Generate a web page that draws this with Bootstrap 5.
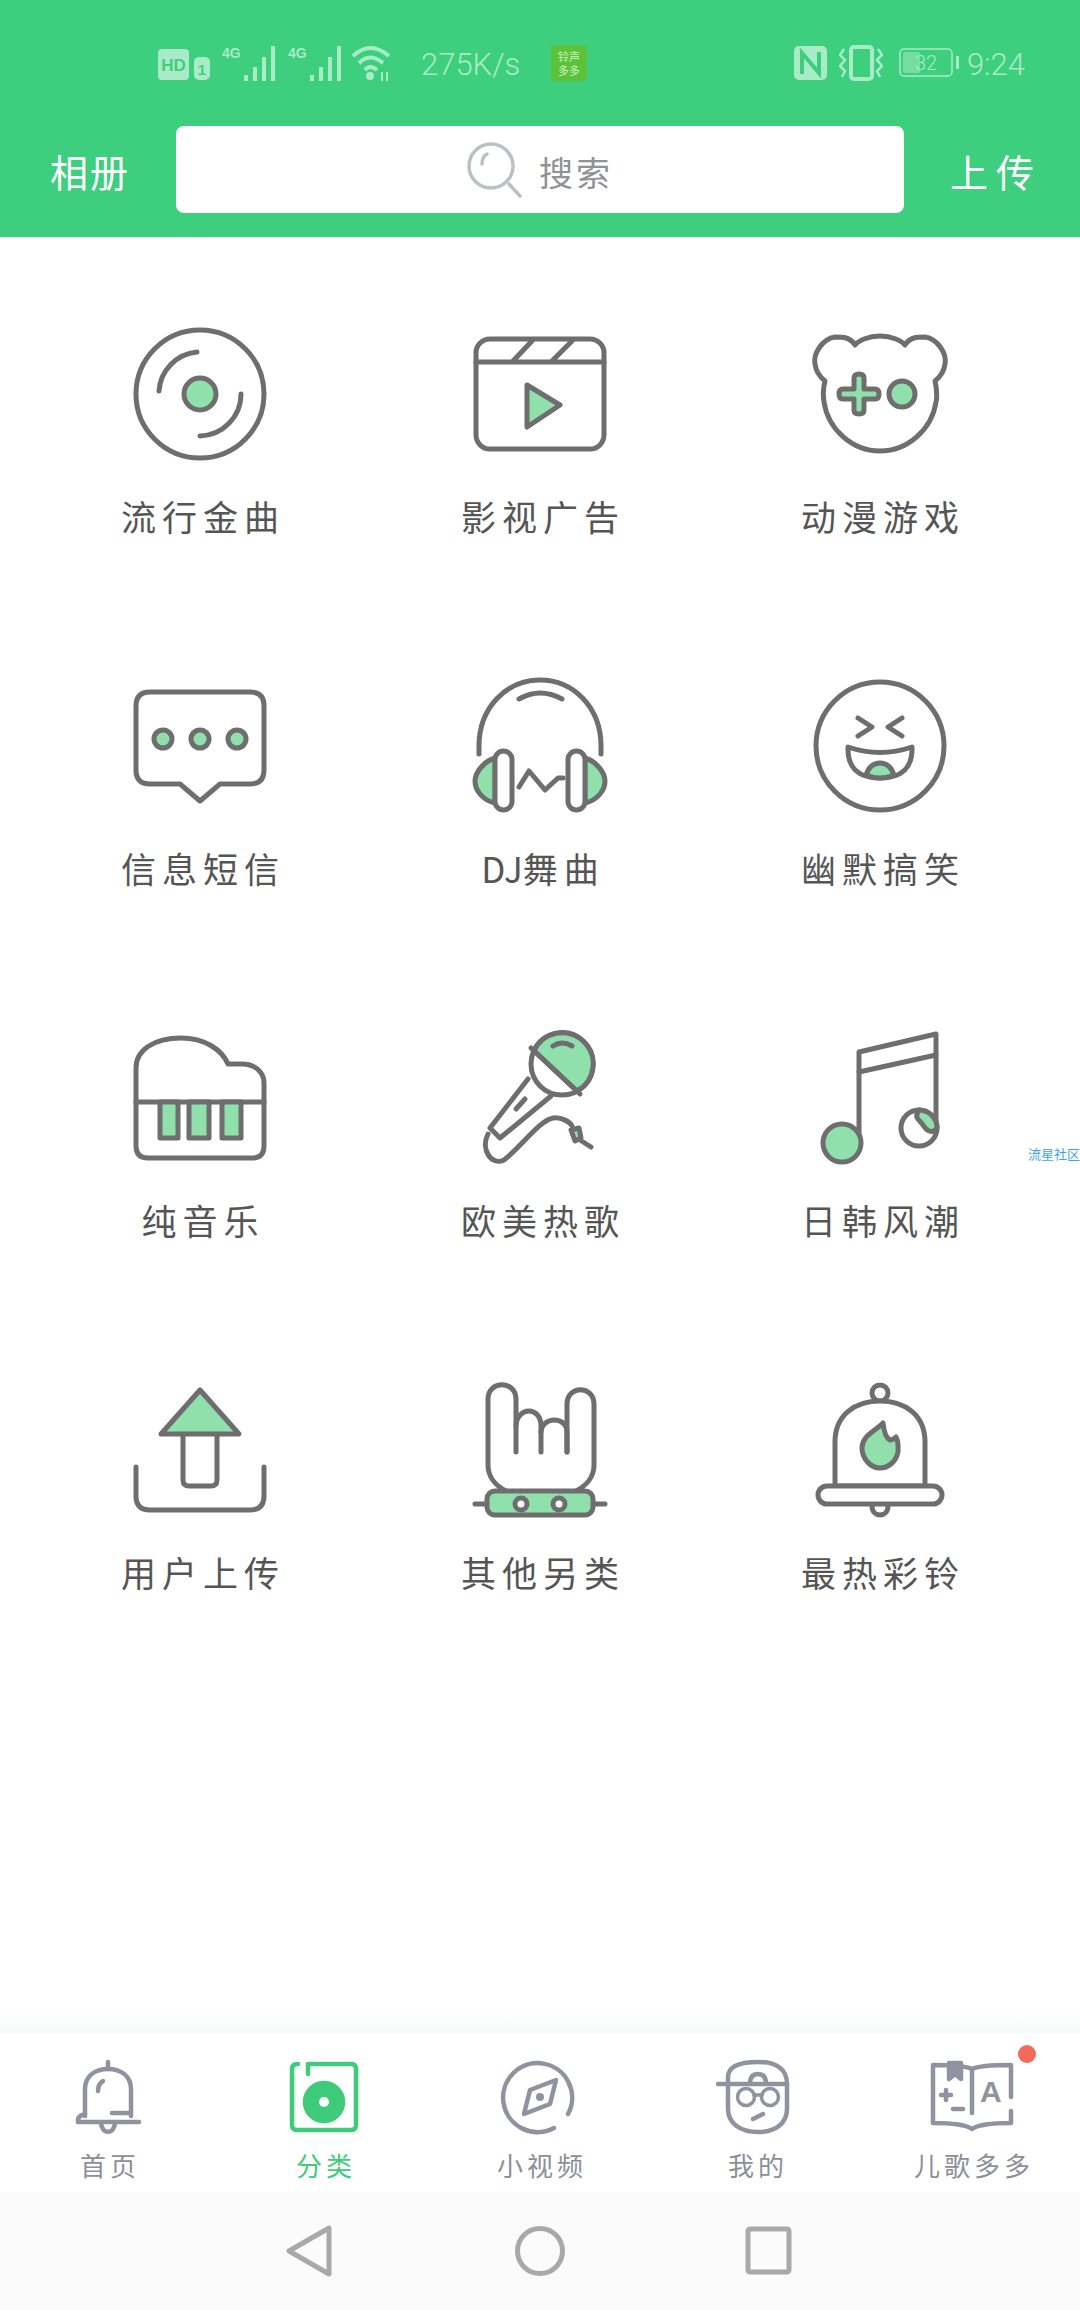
<!DOCTYPE html>
<html lang="zh-CN">
<head>
  <meta charset="UTF-8" />
  <meta name="viewport" content="width=device-width, initial-scale=1.0"/>
  <title>铃声多多</title>
  <link href="https://cdn.jsdelivr.net/npm/bootstrap@5.3.0/dist/css/bootstrap.min.css" rel="stylesheet">
  <style>
    body { background: #fff; font-family: "Noto Sans CJK SC", "Liberation Sans", sans-serif; }
    .phone { width: 1080px; height: 2310px; overflow: hidden; position: relative; }

    .top-head { background: #3ecf7e; height: 237px; padding-top: 44px; }
    .stat-bar { height: 37px; color: #a9ebc6; font-family: Roboto, "Liberation Sans", sans-serif; font-size: 31px; font-weight: 300; padding-left: 158px; padding-right: 55px; }
    .stat-bar svg { display: block; flex: none; fill: #a9ebc6; stroke: none; }
    .stat-txt { padding-top: 5px; }
    .gap-sig { margin-left: 12px; }
    .gap-wifi { margin-left: 9px; }
    .gap-vib { margin-left: 11px; }
    .speed { margin-left: 30px; width: 98px; margin-right: 32px; white-space: nowrap; }
    .app-tile { width: 36px; height: 36px; background: #5cc23a; border-radius: 3px; color: #c9f0c0; font: 11px/14px "Noto Sans CJK SC", sans-serif; text-align: center; padding-top: 4px; }
    .search-row { margin-top: 45px; height: 87px; padding: 0 46px 0 50px; }
    .side-txt { color: #fff; font-size: 38px; line-height: 1; white-space: nowrap; padding-top: 3px; }
    .side-l { width: 126px; letter-spacing: 2px; }
    .side-r { width: 84px; letter-spacing: 8px; text-align: right; margin-left: 46px; margin-right: -3px; }
    .search-box { width: 728px; height: 87px; background: #fff; border-radius: 8px; color: #8f9296; font-size: 34px; letter-spacing: 3px; }
    .search-box span { padding-top: 3px; }

    .cat-grid { padding: 87px 30px 0; }
    .cat-cell { height: 352px; }
    .cat-cell svg { display: block; margin: 0 auto; }
    .cat-name { margin-top: 27px; font-size: 35px; line-height: 50px; color: #555; letter-spacing: 6px; text-align: center; margin-right: -6px; }
    .latin-tight { letter-spacing: 0; }

    .ic { fill: none; stroke: #6e6e6e; stroke-width: 5; stroke-linecap: round; stroke-linejoin: round; }
    .ic .gf { fill: #90e0ac; }
    .ic .wf { fill: #fff; }

    .watermark { position: absolute; left: 1028px; top: 1146px; font-size: 13px; line-height: 16px; color: #3fa4f0; white-space: nowrap; }

    .strip { position: absolute; left: 0; right: 0; top: 2012px; height: 21px; background: linear-gradient(#fff, #f7f8f8); }
    .tab-bar { position: absolute; left: 0; right: 0; top: 2033px; height: 159px; background: #fff; }
    .tab-item { width: 216px; padding-top: 24px; }
    .tab-item svg { display: block; }
    .tab-name { margin-top: 8px; font-size: 26px; line-height: 40px; color: #8b8f98; letter-spacing: 4px; margin-right: -4px; white-space: nowrap; }
    .tab-on { color: #3ecb7a; }
    .tab-ic { fill: none; stroke: #8f93a0; stroke-width: 4.5; stroke-linecap: round; stroke-linejoin: round; }
    .tab-grn { stroke: #3ecb7a; }
    .thin-line { stroke-width: 3.5; }
    .book-a { font: bold 30px "Liberation Sans", sans-serif; fill: #8f93a0; stroke: none; }
    .red-dot { position: absolute; left: 154px; top: 12px; width: 18px; height: 18px; border-radius: 50%; background: #f4695a; }

    .sys-bar { position: absolute; left: 0; right: 0; top: 2192px; height: 118px; background: #fbfbfb; }
    .sys-bar svg { position: absolute; top: 0; left: 0; fill: none; stroke: #a9a9a9; stroke-width: 5; stroke-linejoin: round; }
  </style>
</head>
<body>
<div class="phone">

  <header class="top-head">
    <div class="stat-bar d-flex align-items-center">
      <svg width="52" height="36" viewBox="0 0 52 36">
        <rect x="0" y="4" width="31" height="31" rx="4"/>
        <rect x="36" y="12" width="16" height="23" rx="5"/>
        <text x="15.500" y="26" font-size="17" font-weight="bold" text-anchor="middle" fill="#3ecf7e" font-family="Liberation Sans">HD</text>
        <text x="44" y="30" font-size="15" font-weight="bold" text-anchor="middle" fill="#3ecf7e" font-family="Liberation Sans">1</text>
      </svg>
      <svg class="gap-sig" width="54" height="36" viewBox="0 0 54 36">
        <text x="0" y="13" font-size="14" font-weight="bold" font-family="Liberation Sans">4G</text>
        <rect x="22" y="30" width="4" height="6"/><rect x="31" y="22" width="4" height="14"/><rect x="40" y="12" width="4" height="24"/><rect x="49" y="1" width="4" height="35"/>
      </svg>
      <svg class="gap-sig" width="54" height="36" viewBox="0 0 54 36">
        <text x="0" y="13" font-size="14" font-weight="bold" font-family="Liberation Sans">4G</text>
        <rect x="22" y="30" width="4" height="6"/><rect x="31" y="22" width="4" height="14"/><rect x="40" y="12" width="4" height="24"/><rect x="49" y="1" width="4" height="35"/>
      </svg>
      <svg class="gap-wifi" width="40" height="36" viewBox="0 0 40 36">
        <path d="M2 11 Q19 -5 38 11" fill="none" stroke="#a9ebc6" stroke-width="4"/>
        <path d="M8 18 Q19 7 32 18" fill="none" stroke="#a9ebc6" stroke-width="4"/>
        <path d="M14 25 Q19 19 26 25" fill="none" stroke="#a9ebc6" stroke-width="4"/>
        <circle cx="19" cy="31" r="4"/>
        <path d="M31 36V27M36 36V27" stroke="#a9ebc6" stroke-width="2"/>
      </svg>
      <span class="speed stat-txt">275K/s</span>
      <div class="app-tile">铃声<br>多多</div>
      <div class="flex-grow-1"></div>
      <svg width="34" height="34" viewBox="0 0 34 34">
        <rect x="0" y="0" width="33" height="34" rx="5"/>
        <path d="M8 28V7L25 27V6" fill="none" stroke="#3ecf7e" stroke-width="4"/>
      </svg>
      <svg class="gap-vib" width="44" height="36" viewBox="0 0 44 36">
        <rect x="12" y="2" width="21" height="32" rx="3" fill="none" stroke="#a9ebc6" stroke-width="4"/>
        <path d="M5 4 L1 10 L6 15 L1 21 L6 26 L3 32M39 4 L43 10 L38 15 L43 21 L38 26 L41 32" fill="none" stroke="#a9ebc6" stroke-width="2.500"/>
      </svg>
      <svg class="ms-3" width="60" height="30" viewBox="0 0 60 30">
        <rect x="1" y="1" width="52" height="27" rx="4" fill="none" stroke="#a9ebc6" stroke-width="1.500"/>
        <rect x="4" y="4" width="17" height="21" rx="2" opacity="0.500"/>
        <rect x="57" y="8" width="3" height="13" rx="1"/>
        <text x="27" y="22" font-size="20" text-anchor="middle" font-family="Roboto">32</text>
      </svg>
      <span class="ms-2 stat-txt">9:24</span>
    </div>

    <div class="search-row d-flex align-items-center">
      <div class="side-txt side-l">相册</div>
      <div class="search-box d-flex align-items-center justify-content-center">
        <svg width="56" height="56" viewBox="0 0 56 56" class="me-3" fill="none" stroke="#bcc0c6" stroke-width="3.500" stroke-linecap="round">
          <circle cx="24" cy="24" r="22"/>
          <path d="M20 12 Q15 15 15 22"/>
          <path d="M42 42 L53 54"/>
        </svg>
        <span>搜索</span>
      </div>
      <div class="side-txt side-r">上传</div>
    </div>
  </header>

  <main class="cat-grid row g-0 row-cols-3">
    <div class="col cat-cell">
      <svg class="ic" width="140" height="140" viewBox="0 0 140 140">
        <circle cx="70" cy="70" r="64"/>
        <circle class="gf" cx="70" cy="70" r="16"/>
        <path d="M29 67 A42 42 0 0 1 67 28"/>
        <path d="M111 70 A42 42 0 0 1 70 112"/>
      </svg>
      <div class="cat-name">流行金曲</div>
    </div>
    <div class="col cat-cell">
      <svg class="ic" width="140" height="140" viewBox="0 0 140 140">
        <rect x="6" y="15" width="128" height="110" rx="14"/>
        <path d="M6 38H134M62 17L43 37M102 17L82 37"/>
        <path class="gf" d="M57 61L90 81L57 103Z"/>
      </svg>
      <div class="cat-name">影视广告</div>
    </div>
    <div class="col cat-cell">
      <svg class="ic" width="140" height="140" viewBox="0 0 140 140">
        <path d="M45 21C48 17 58 12 70 12C82 12 92 17 95 21C100 13 107 13 115 13C128 15 137 30 135 40C134 48 130 53 125 57C127 65 127 75 126 78C122 105 98 127 70 127C42 127 18 105 14 78C13 72 13 65 15 57C10 53 6 48 5 40C3 30 12 15 25 13C33 13 40 13 45 21Z"/>
        <path class="gf" d="M44 54Q44 50 49 50Q54 50 54 54V65H65Q69 65 69 70Q69 75 65 75H54V86Q54 90 49 90Q44 90 44 86V75H33Q29 75 29 70Q29 65 33 65H44Z"/>
        <circle class="gf" cx="92" cy="70" r="13"/>
      </svg>
      <div class="cat-name">动漫游戏</div>
    </div>

    <div class="col cat-cell">
      <svg class="ic" width="140" height="140" viewBox="0 0 140 140">
        <path d="M20 16H120Q134 16 134 30V94Q134 108 120 108H90L70 125L50 108H20Q6 108 6 94V30Q6 16 20 16Z"/>
        <circle class="gf" cx="33" cy="63" r="9"/>
        <circle class="gf" cx="70" cy="63" r="9"/>
        <circle class="gf" cx="107" cy="63" r="9"/>
      </svg>
      <div class="cat-name">信息短信</div>
    </div>
    <div class="col cat-cell">
      <svg class="ic" width="140" height="140" viewBox="0 0 140 140">
        <path d="M9 78V70C9 32 36 4 70 4C104 4 131 32 131 70V78"/>
        <path d="M49 23Q70 11 92 23"/>
        <path class="gf" d="M25 82C12 86 5 98 5 105C5 114 12 124 25 127Z"/>
        <path class="gf" d="M115 82C128 86 135 98 135 105C135 114 128 124 115 127Z"/>
        <rect class="wf" x="25" y="75" width="17" height="59" rx="8.500"/>
        <rect class="wf" x="98" y="75" width="17" height="59" rx="8.500"/>
        <path d="M49 111L59 95L75 114L88 102H93"/>
      </svg>
      <div class="cat-name"><span class="latin-tight">DJ</span>舞曲</div>
    </div>
    <div class="col cat-cell">
      <svg class="ic" width="140" height="140" viewBox="0 0 140 140">
        <circle cx="70" cy="70" r="64"/>
        <path d="M48 42L62 51L48 60M92 42L78 51L92 60"/>
        <path d="M38 71Q70 82 102 71Q103 102 70 102Q37 102 38 71Z"/>
        <path class="gf" d="M56 99Q60 87 70 87Q80 87 84 99Q70 105 56 99Z"/>
      </svg>
      <div class="cat-name">幽默搞笑</div>
    </div>

    <div class="col cat-cell">
      <svg class="ic" width="140" height="140" viewBox="0 0 140 140">
        <path d="M6 74V40C6 22 24 10 51 10C75 10 92 22 98 36H112C126 36 134 45 134 55V118Q134 130 122 130H18Q6 130 6 118Z"/>
        <path d="M6 74H134"/>
        <rect class="gf" x="30" y="74" width="18" height="36"/>
        <rect class="gf" x="59" y="74" width="20" height="36"/>
        <rect class="gf" x="92" y="74" width="19" height="36"/>
      </svg>
      <div class="cat-name">纯音乐</div>
    </div>
    <div class="col cat-cell">
      <svg class="ic" width="140" height="140" viewBox="0 0 140 140">
        <circle cx="92" cy="36" r="31"/>
        <path class="gf" d="M64 22.800A31 31 0 1 1 106.900 63Z"/>
        <path d="M61 20L110 66"/>
        <path d="M83 18Q92 12 102 18"/>
        <path d="M58 51L20 100L30 110L81 68"/>
        <path d="M55 71L46 81"/>
        <path d="M18 106C10 122 22 138 34 132C50 120 70 92 83 90C92 89 100 94 102 98"/>
        <path class="gf" d="M101 102L109 100L111 110L105 113Z"/>
        <path d="M110 112L121 119"/>
      </svg>
      <div class="cat-name">欧美热歌</div>
    </div>
    <div class="col cat-cell">
      <svg class="ic" width="140" height="140" viewBox="0 0 140 140">
        <path d="M49 115V24L126 6V100"/>
        <path d="M49 44L126 27"/>
        <circle class="gf" cx="32" cy="115" r="19"/>
        <circle cx="109" cy="100" r="18"/>
        <path class="gf" d="M109 82A18 18 0 0 1 127 100C122 107 116 102 113 97C110 92 103 90 109 82Z"/>
      </svg>
      <div class="cat-name">日韩风潮</div>
    </div>

    <div class="col cat-cell">
      <svg class="ic" width="140" height="140" viewBox="0 0 140 140">
        <path d="M6 87V116Q6 130 20 130H120Q134 130 134 116V87"/>
        <path d="M53 54V100Q53 106 59 106H81Q87 106 87 100V54"/>
        <path class="gf" d="M70 10L109 54H31Z"/>
      </svg>
      <div class="cat-name">用户上传</div>
    </div>
    <div class="col cat-cell">
      <svg class="ic" width="140" height="140" viewBox="0 0 140 140">
        <path d="M36 111C26 106 18 97 18 85V19C18 0 46 0 46 19V72"/>
        <path d="M46 46C47 26 71 26 71 46V72"/>
        <path d="M71 52C72 36 97 36 97 52V72"/>
        <path d="M97 72V24C97 5 124 5 124 24V85C124 97 116 106 106 111"/>
        <path d="M5 124H17M123 124H135"/>
        <rect class="gf" x="17" y="111" width="106" height="24" rx="8"/>
        <circle class="wf" cx="51" cy="124" r="6"/>
        <circle class="wf" cx="89" cy="124" r="6"/>
      </svg>
      <div class="cat-name">其他另类</div>
    </div>
    <div class="col cat-cell">
      <svg class="ic" width="140" height="140" viewBox="0 0 140 140">
        <circle cx="70" cy="13" r="8"/>
        <path d="M62 126C62 138 78 138 78 126"/>
        <path class="wf" d="M25 106V62C25 35 45 21 70 21C95 21 115 35 115 62V106Z"/>
        <rect class="wf" x="8" y="106" width="124" height="18" rx="9"/>
        <path class="gf" d="M73 43C74 52 76 58 80 60C83 60 85 58 86 57C89 62 88 70 88 72C86 82 78 88 70 88C60 88 52 78 52 68C52 56 64 52 73 43Z"/>
      </svg>
      <div class="cat-name">最热彩铃</div>
    </div>
  </main>

  <div class="watermark">流星社区</div>

  <div class="strip"></div>
  <nav class="tab-bar d-flex">
    <div class="tab-item d-flex flex-column align-items-center">
      <svg class="tab-ic" width="80" height="80" viewBox="0 0 80 80">
        <path d="M40 5V12"/>
        <path d="M17 59V32C17 19 27 12 40 12C53 12 63 19 63 32V59"/>
        <path d="M10 65Q9 59 17 57"/>
        <path d="M10 65H71"/>
        <path d="M33 65C33 78 47 78 47 65"/>
        <path d="M30 34Q30 27 35 24"/>
        <path d="M44 56H63"/>
      </svg>
      <div class="tab-name">首页</div>
    </div>
    <div class="tab-item d-flex flex-column align-items-center">
      <svg class="tab-ic tab-grn" width="80" height="80" viewBox="0 0 80 80">
        <path d="M14 7Q8 7 8 12V68Q8 73 13 73H67Q72 73 72 68V12Q72 7 67 7H24V17"/>
        <circle cx="40" cy="45" r="19" fill="#3ecb7a"/>
        <circle cx="40" cy="45" r="5" fill="#fff" stroke="none"/>
      </svg>
      <div class="tab-name tab-on">分类</div>
    </div>
    <div class="tab-item d-flex flex-column align-items-center">
      <svg class="tab-ic" width="80" height="80" viewBox="0 0 80 80">
        <path d="M68 57A34.500 34.500 0 1 0 54 71"/>
        <path d="M56 23L30 33L24 57L50 47Z"/>
        <circle cx="40" cy="40" r="4" fill="#8f93a0" stroke="none"/>
      </svg>
      <div class="tab-name">小视频</div>
    </div>
    <div class="tab-item d-flex flex-column align-items-center">
      <svg class="tab-ic" width="80" height="80" viewBox="0 0 80 80">
        <path d="M12 27V20C12 10 22 5 42 5C60 5 71 12 71 27V52C71 66 60 75 42 75C24 75 12 66 12 52V27"/>
        <path d="M2 27H71"/>
        <path d="M34 27Q34 17 42 17Q50 17 50 27"/>
        <circle class="thin-line" cx="30" cy="40" r="8.500"/>
        <circle class="thin-line" cx="54" cy="40" r="8.500"/>
        <path class="thin-line" d="M38 38H46"/>
        <path d="M37 62L47 57"/>
      </svg>
      <div class="tab-name">我的</div>
    </div>
    <div class="tab-item d-flex flex-column align-items-center position-relative">
      <svg class="tab-ic" width="84" height="80" viewBox="0 0 84 80">
        <path d="M42 12Q34 8 3 8V66Q34 66 42 72Q50 66 81 66V54"/>
        <path d="M81 40V8Q50 8 42 12V56"/>
        <path d="M19 6H31V22L25 17L19 22Z" fill="#8f93a0"/>
        <path d="M11 38H21M16 33V43M23 52H33"/>
        <text class="book-a" x="50" y="45">A</text>
      </svg>
      <div class="tab-name">儿歌多多</div>
      <span class="red-dot"></span>
    </div>
  </nav>

  <div class="sys-bar">
    <svg width="1080" height="118" viewBox="0 0 1080 118">
      <path d="M329 36L289 59L329 82Z"/>
      <circle cx="540" cy="59" r="22.500"/>
      <rect x="748" y="37" width="41" height="43" rx="2"/>
    </svg>
  </div>
</div>

<script src="https://cdn.jsdelivr.net/npm/bootstrap@5.3.0/dist/js/bootstrap.bundle.min.js"></script>
</body>
</html>
